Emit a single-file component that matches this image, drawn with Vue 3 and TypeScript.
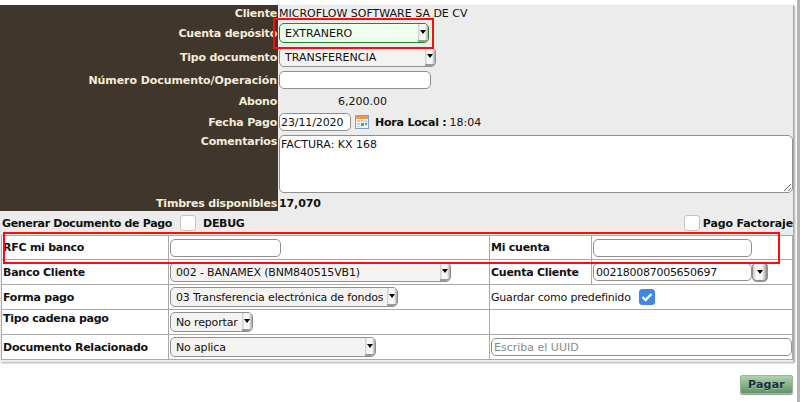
<script setup lang="ts">
const hora = '18:04'
</script>

<template>
  <div class="page">
    <div class="panel">
      <div class="top">
        <div class="labels">
          <div class="l h16">Cliente</div>
          <div class="l h24">Cuenta depósito</div>
          <div class="l h24">Tipo documento</div>
          <div class="l h22 numero">Número Documento/Operación</div>
          <div class="l h20">Abono</div>
          <div class="l h22">Fecha Pago</div>
          <div class="l coment">Comentarios</div>
          <div class="l timbres">Timbres disponibles</div>
        </div>
        <div class="values">
          <div class="v h16">MICROFLOW SOFTWARE SA DE CV</div>
          <div class="v h24">
            <div class="sel green w150"><span class="t">EXTRANERO</span><i class="arr"><b></b></i></div>
          </div>
          <div class="v h24">
            <div class="sel w157"><span class="t">TRANSFERENCIA</span><i class="arr"><b></b></i></div>
          </div>
          <div class="v h22"><input class="inp w152" type="text" /></div>
          <div class="v h20 abono">6,200.00</div>
          <div class="v h22 fecha">
            <input class="inp date" type="text" value="23/11/2020" />
            <svg class="cal" width="14" height="14" viewBox="0 0 14 14">
              <rect x="0.5" y="0.5" width="13" height="13" fill="#eef4fa" stroke="#7fa3c6" />
              <rect x="1" y="1" width="12" height="3" fill="#ee9a4d" />
              <rect x="2" y="5" width="3" height="2" fill="#e8c48a" />
              <rect x="6" y="5" width="3" height="2" fill="#b9d0e6" />
              <rect x="10" y="5" width="2" height="2" fill="#b9d0e6" />
              <rect x="2" y="8" width="3" height="2" fill="#b9d0e6" />
              <rect x="6" y="8" width="3" height="3" fill="#5aa84c" />
              <rect x="10" y="8" width="2" height="2" fill="#5aa84c" />
              <rect x="2" y="11" width="3" height="1" fill="#b9d0e6" />
            </svg>
            <b class="hl">Hora Local :</b><span class="hora">{{ hora }}</span>
          </div>
          <div class="ta-wrap"><textarea class="ta" spellcheck="false">FACTURA: KX 168</textarea></div>
          <div class="v timbresv"><b>17,070</b></div>
        </div>
      </div>

      <div class="opts">
        <b>Generar Documento de Pago</b>
        <span class="chk"></span>
        <b class="debug">DEBUG</b>
        <span class="spacer"></span>
        <span class="chk"></span>
        <b class="factor">Pago Factoraje</b>
      </div>

      <table class="tbl">
        <tbody>
          <tr class="first">
            <td class="c1"><b>RFC mi banco</b></td>
            <td class="c2"><input class="inp rfc" type="text" /></td>
            <td class="c3"><b>Mi cuenta</b></td>
            <td class="c4"><input class="inp micta" type="text" /></td>
          </tr>
          <tr>
            <td class="c1"><b>Banco Cliente</b></td>
            <td class="c2"><div class="sel w281"><span class="t">002 - BANAMEX (BNM840515VB1)</span><i class="arr"><b></b></i></div></td>
            <td class="c3"><b>Cuenta Cliente</b></td>
            <td class="c4">
              <div class="cta">
                <input class="inp ctacli" type="text" value="002180087005650697" />
                <i class="arr solo"><b></b></i>
              </div>
            </td>
          </tr>
          <tr>
            <td class="c1"><b>Forma pago</b></td>
            <td class="c2"><div class="sel w228"><span class="t">03 Transferencia electrónica de fondos</span><i class="arr"><b></b></i></div></td>
            <td class="c3" colspan="2">
              <div class="guardar">
                <span class="gtext">Guardar como predefinido</span>
                <span class="chk on">
                  <svg width="12" height="10" viewBox="0 0 12 10"><path d="M1.5 5 L4.5 8 L10.5 2" fill="none" stroke="#fff" stroke-width="2.4" /></svg>
                </span>
              </div>
            </td>
          </tr>
          <tr>
            <td class="c1 up"><b>Tipo cadena pago</b></td>
            <td class="c2"><div class="sel w83"><span class="t">No reportar</span><i class="arr"><b></b></i></div></td>
            <td class="c3" colspan="2"></td>
          </tr>
          <tr>
            <td class="c1"><b>Documento Relacionado</b></td>
            <td class="c2"><div class="sel w206"><span class="t">No aplica</span><i class="arr"><b></b></i></div></td>
            <td class="c3" colspan="2"><input class="inp uuid" type="text" placeholder="Escriba el UUID" /></td>
          </tr>
        </tbody>
      </table>
    </div>

    <div class="foot"><button class="pagar" type="button">Pagar</button></div>

    <div class="mark m1"></div>
    <div class="mark m2"></div>
  </div>
</template>

<style>
html, body { margin: 0; background: #fff; }
</style>

<style scoped>
.page {
  position: relative;
  width: 800px;
  height: 402px;
  overflow: hidden;
  background: #fff;
  padding-top: 5px;
  box-sizing: border-box;
  border-right: 3px solid #b4b4b4;
  font-family: "DejaVu Sans", sans-serif;
  font-size: 11px;
  color: #111;
}
.panel {
  width: 794px;
  height: 357px;
  background: #ececec;
  border-right: 1px solid #a9a9a9;
  box-shadow: 1px 1px 2px #aaa;
  box-sizing: border-box;
}
.top { display: flex; height: 206px; }
.labels {
  width: 278px;
  flex: none;
  background: #40362c;
  color: #f2ecd8;
  font-weight: bold;
  letter-spacing: -0.2px;
}
.l { padding-right: 1px; display: flex; align-items: center; justify-content: flex-end; }
.numero { letter-spacing: -0.08px; }
.h16 { height: 16px; }
.h20 { height: 20px; }
.h22 { height: 22px; }
.h24 { height: 24px; }
.coment { height: 16px; }
.timbres { margin-top: 47px; height: 15px; }
.values { flex: 1; padding-left: 1px; }
.v { display: flex; align-items: center; }
.sel {
  display: flex;
  align-items: stretch;
  height: 20px;
  box-sizing: border-box;
  background: #f4f3f1;
  border: 1px solid #8f8f8f;
  border-radius: 5px;
  overflow: hidden;
}
.sel .t {
  padding-left: 5px;
  flex: 1;
  white-space: nowrap;
  line-height: 20px;
}
.c2 .sel .t { letter-spacing: -0.15px; }
.green { background: #efffef; border-color: #1f8a1f; }
.w150 { width: 150px; }
.w157 { width: 157px; }
.w152 { width: 152px; }
.w281 { width: 281px; }
.w228 { width: 228px; }
.w83 { width: 83px; }
.w206 { width: 206px; }
.arr {
  display: flex;
  flex: none;
  width: 10px;
  box-sizing: border-box;
  background: linear-gradient(to right, #c9c9c9, #f7f7f7 25%, #f7f7f7 70%, #a5a5a5);
  border-bottom: 2px solid #9a9a9a;
  align-items: center;
  justify-content: center;
}
.arr b {
  width: 0;
  height: 0;
  border-left: 3.5px solid transparent;
  border-right: 3.5px solid transparent;
  border-top: 4px solid #000;
}
.inp {
  font: 11px "DejaVu Sans", sans-serif;
  color: #111;
  background: #fff;
  border: 1px solid #8f8f8f;
  border-radius: 5px;
  box-sizing: border-box;
  height: 18px;
  padding: 0 2px;
  margin: 0;
  outline: none;
}
.inp::placeholder { color: #8a8a8a; }
.abono { padding-left: 59px; }
.fecha .date { width: 72px; padding: 0 1px; letter-spacing: -0.1px; }
.cal { margin-left: 4px; }
.hl { margin-left: 6px; letter-spacing: -0.2px; }
.hora { margin-left: 3px; }
.ta-wrap { height: 58px; margin-top: 2px; }
.ta {
  display: block;
  width: 514px;
  height: 58px;
  box-sizing: border-box;
  border: 1px solid #8f8f8f;
  border-radius: 5px;
  padding: 2px 1px;
  margin: 0;
  font: 11px "DejaVu Sans", sans-serif;
  color: #111;
  outline: none;
}
.timbresv { height: 15px; margin-top: 3px; letter-spacing: -0.1px; }
.opts {
  display: flex;
  align-items: center;
  height: 22px;
  padding-left: 2px;
  margin-top: 1px;
  letter-spacing: -0.32px;
}
.opts .chk { margin-left: 8px; }
.debug { margin-left: 7px; }
.spacer { flex: 1; }
.factor { margin-left: 3px; letter-spacing: -0.14px; }
.chk {
  display: inline-flex;
  align-items: center;
  justify-content: center;
  width: 16px;
  height: 16px;
  flex: none;
  box-sizing: border-box;
  background: #fff;
  border: 1px solid #c8c4bd;
  border-radius: 3px;
}
.chk.on { background: #3f87e6; border-color: #3f87e6; }
.tbl {
  margin: 1px 0 0 1px;
  width: 792px;
  table-layout: fixed;
  border-collapse: collapse;
  background: #fff;
}
.tbl td {
  border: 1px solid #a9a9a9;
  height: 25px;
  padding: 0 1px;
  box-sizing: border-box;
  vertical-align: middle;
}
.tbl td b { letter-spacing: -0.25px; }
.tbl .first td { height: 24px; }
.tbl .up { vertical-align: top; padding-top: 2px; }
.c1 { width: 167px; }
.c2 { width: 321px; }
.c3 { width: 102px; }
.rfc { width: 111px; }
.micta { width: 159px; }
.cta { display: flex; align-items: center; }
.ctacli { width: 159px; letter-spacing: -0.28px; }
.solo {
  height: 20px;
  width: 16px;
  border: 1px solid #8f8f8f;
  border-right-width: 2px;
  border-bottom-width: 2px;
  border-radius: 5px;
  margin-left: 0;
}
.guardar { display: flex; align-items: center; }
.gtext { letter-spacing: -0.2px; }
.guardar .chk { margin-left: 8px; }
.uuid { width: 301px; display: block; }
.foot { display: flex; justify-content: flex-end; padding: 13px 4px 0 0; }
.pagar {
  width: 53px;
  height: 19px;
  padding: 0;
  border: 1px solid #9bb59b;
  border-radius: 2px;
  background: linear-gradient(#b0d2ae, #5f9468);
  box-shadow: 0 1px 1px #999;
  color: #1f2c44;
  font: bold 11px "DejaVu Sans", sans-serif;
  letter-spacing: 0.2px;
  text-shadow: 0 1px 0 rgba(255, 255, 255, 0.35);
}
.mark {
  position: absolute;
  border: 2px solid #fb0d0d;
  box-sizing: border-box;
  pointer-events: none;
}
.m1 { left: 273px; top: 18px; width: 161px; height: 31px; }
.m2 { left: 3px; top: 232px; width: 777px; height: 32px; }
</style>
